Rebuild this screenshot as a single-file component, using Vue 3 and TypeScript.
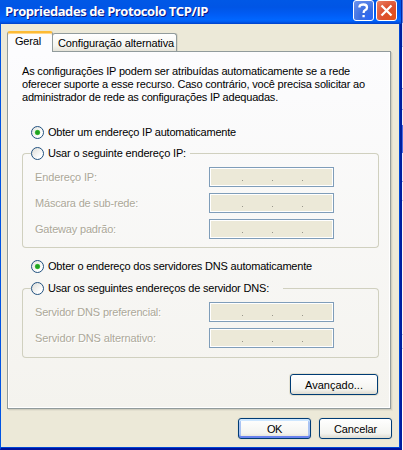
<script setup lang="ts">
import { ref } from 'vue'

interface Row { label: string; width: number }
interface Section {
  id: string
  auto: Row
  manual: Row
  fields: Row[]
}

const title = 'Propriedades de Protocolo TCP/IP'
const intro: Row[] = [
  { label: 'As configurações IP podem ser atribuídas automaticamente se a rede', width: 328 },
  { label: 'oferecer suporte a esse recurso. Caso contrário, você precisa solicitar ao', width: 343 },
  { label: 'administrador de rede as configurações IP adequadas.', width: 256 },
]
const sections: Section[] = [
  {
    id: 'address',
    auto: { label: 'Obter um endereço IP automaticamente', width: 188 },
    manual: { label: 'Usar o seguinte endereço IP:', width: 138 },
    fields: [
      { label: 'Endereço IP:', width: 62 },
      { label: 'Máscara de sub-rede:', width: 103 },
      { label: 'Gateway padrão:', width: 81 },
    ],
  },
  {
    id: 'dns',
    auto: { label: 'Obter o endereço dos servidores DNS automaticamente', width: 264 },
    manual: { label: 'Usar os seguintes endereços de servidor DNS:', width: 221 },
    fields: [
      { label: 'Servidor DNS preferencial:', width: 126 },
      { label: 'Servidor DNS alternativo:', width: 121 },
    ],
  },
]
const mode = ref<Record<string, string>>({ address: 'auto', dns: 'auto' })

const vFit = {
  mounted(el: HTMLElement, binding: { value: number }) {
    const natural = el.getBoundingClientRect().width
    const count = (el.textContent ?? '').length
    el.style.letterSpacing = `${(binding.value - natural) / count}px`
  },
}
</script>

<template>
  <div class="screen">
    <div class="window">
      <header class="titlebar">
        <span v-fit="203" class="t title">{{ title }}</span>
        <button class="cap help" aria-label="Ajuda">
          <svg width="21" height="21" viewBox="0 0 21 21"><path d="M6.5 7.5V6.5Q7 4.5 10.5 4.5Q14 4.5 14 7.4Q14 9 12.2 10.1Q10.6 11 10.6 13M10.6 15v2.2" /></svg>
        </button>
        <button class="cap close" aria-label="Fechar">
          <svg width="21" height="21" viewBox="0 0 21 21"><path d="M5.5 5.5l10 10M15.5 5.5l-10 10" /></svg>
        </button>
      </header>
      <main class="client">
        <nav class="tabs">
          <div class="tab active"><span v-fit="26" class="t">Geral</span></div>
          <div class="tab"><span v-fit="116" class="t">Configuração alternativa</span></div>
        </nav>
        <section class="panel">
          <div class="intro">
            <div v-for="line in intro" :key="line.label"><span v-fit="line.width" class="t">{{ line.label }}</span></div>
          </div>
          <div v-for="s in sections" :key="s.id" class="section" :class="s.id">
            <div class="option" @click="mode[s.id] = 'auto'">
              <i class="radio" :class="{ on: mode[s.id] === 'auto' }"></i>
              <span v-fit="s.auto.width" class="t">{{ s.auto.label }}</span>
            </div>
            <div class="option manual" @click="mode[s.id] = 'manual'">
              <i class="edge"></i>
              <i class="radio" :class="{ on: mode[s.id] === 'manual' }"></i>
              <span v-fit="s.manual.width" class="t">{{ s.manual.label }}</span>
              <i class="rule"></i>
            </div>
            <div class="group">
              <div v-for="f in s.fields" :key="f.label" class="row">
                <span v-fit="f.width" class="t">{{ f.label }}</span>
                <div class="octets"><i></i><i></i><i></i></div>
              </div>
            </div>
          </div>
          <div class="more"><button class="btn wide"><span v-fit="58" class="t">Avançado...</span></button></div>
        </section>
        <footer class="actions">
          <button class="btn default"><span v-fit="15" class="t">OK</span></button>
          <button class="btn"><span v-fit="43" class="t">Cancelar</span></button>
        </footer>
      </main>
    </div>
    <div class="behind"></div>
  </div>
</template>

<style>
body { overflow: hidden; }
</style>

<style scoped>
* { box-sizing: border-box; }
.screen {
  display: flex;
  width: 403px;
  height: 450px;
  overflow: hidden;
  font: 11px/13px "Liberation Sans", Arial, sans-serif;
  color: #000;
}
.t { display: inline-block; white-space: nowrap; flex: none; }
button { margin: 0; padding: 0; font: inherit; color: inherit; }
.window {
  display: flex;
  flex-direction: column;
  width: 402px;
  height: 450px;
  background: #ece9d8;
  border: solid;
  border-width: 0 2px 2px 1px;
  border-color: #0054e3 #001ea0 #00139c #0054e3;
  box-shadow: inset -3px -3px #0046d5;
}
.behind {
  flex: 1;
  background: linear-gradient(#5c7ee0 0 23px, #dcdcf4 23px 46px, #b4b8e0 46px 47px, #fff 47px 88px, #8e9ce0 88px 89px, #e6e6f5 89px 109px, #8e9ce0 109px 110px, #f0f0fa 110px 125px, #4d6ce0 125px 153px, #eef 153px 181px, #8e9ce0 181px 182px, #f5f5fc 182px 200px, #b9c2ec 200px 201px, #f8f8fc 201px 334px, #c4c6e4 334px 335px, #f5f5fc 335px 348px, #c4c6e4 348px 349px, #fff 349px);
}
.titlebar {
  display: flex;
  align-items: flex-start;
  height: 24px;
  margin: 0 -2px 0 -1px;
  padding: 0 5px;
  background: linear-gradient(#0058e6, #0055e5 30%, #005cf5 60%, #0066ff 82%, #005bf0 91%, #0040c8);
  box-shadow: inset -1px 0 #0028a8;
}
.title {
  margin-top: 3px;
  font: bold 13px/16px "Open Sans", "Noto Sans", sans-serif;
  color: #fff;
  text-shadow: 1px 1px #0a1883;
}
.cap {
  width: 21px;
  height: 21px;
  margin-left: 2px;
  border: 1px solid #fff;
  border-radius: 3px;
  background: radial-gradient(circle at 80% 90%, #2a66f5, #3c6ee0 40%, #6d94ee);
}
.cap.help { margin-left: auto; }
.cap.close { background: radial-gradient(circle at 85% 85%, #e0501c, #dc5030 50%, #ec8468); }
.cap svg { display: block; margin: -1px; fill: none; stroke: #fff; stroke-width: 2.3; }
.client {
  flex: 1;
  margin: 0 1px 1px 0;
  padding: 7px 7px 0 6px;
  background: #ece9d8;
}
.tabs { display: flex; align-items: flex-end; height: 20px; position: relative; }
.tab {
  height: 18px;
  width: 125px;
  padding: 3px 0 0 5px;
  margin-left: -1px;
  border: 1px solid #919b9c;
  border-bottom: 0;
  border-radius: 3px 3px 0 0;
  background: linear-gradient(#fff, #f5f5f0 70%, #e5e3d8);
  box-shadow: 1px 0 #d8d5c5;
}
.tab.active {
  z-index: 1;
  width: 46px;
  height: 21px;
  margin: 0 0 -1px;
  padding: 2px 0 0 7px;
  border-top: 2px solid #fdbb35;
  background: #fcfcfe;
  box-shadow: inset 0 1px #ffd78a;
}
.panel {
  width: 384px;
  height: 358px;
  padding: 13px 11px 0 14px;
  border: 1px solid #919b9c;
  background: linear-gradient(#fcfcfe, #f4f3ee);
  box-shadow: 1px 1px #d0cebf, 2px 2px #e3e0d0, inset -1px -1px #fff, inset 1px 0 #fff;
}
.intro { height: 61px; }
.intro > div { height: 13px; }
.section.address { height: 134px; }
.section.dns { height: 114px; }
.option { display: flex; align-items: center; height: 13px; padding-left: 9px; }
.option .t { margin-left: 4px; }
.manual { margin-top: 8px; padding-left: 0; }
.dns .manual { margin-top: 9px; }
.radio {
  flex: none;
  width: 13px;
  height: 13px;
  border: 1px solid #21517f;
  border-radius: 50%;
  background: linear-gradient(135deg, #dcdcd7, #fff 75%);
}
.radio.on { background: radial-gradient(circle, #21a121 0 1.8px, #55c94d 2.4px, transparent 3.1px), linear-gradient(135deg, #e4e4df, #fff 75%); }
.edge, .rule { align-self: flex-end; height: 7px; border-top: 1px solid #d0d0bf; }
.edge { width: 9px; border-left: 1px solid #d0d0bf; border-top-left-radius: 4px; }
.rule { flex: 1; margin-left: 4px; border-right: 1px solid #d0d0bf; border-top-right-radius: 4px; }
.dns .rule { margin-left: 14px; }
.group {
  display: flex;
  flex-direction: column;
  gap: 6px;
  height: 88px;
  padding: 7px 0 0 12px;
  border: 1px solid #d0d0bf;
  border-top: 0;
  border-radius: 0 0 4px 4px;
}
.dns .group { height: 63px; }
.row { display: flex; flex: none; align-items: center; justify-content: space-between; height: 20px; padding-right: 44px; color: #aca899; text-shadow: 1px 1px #fff; }
.octets {
  display: flex;
  gap: 29px;
  width: 125px;
  height: 20px;
  padding: 12px 0 0 32px;
  border: 1px solid #7f9db9;
  background: #ece9d8;
  box-shadow: inset 0 0 0 1px #fff;
}
.octets i { width: 1px; height: 1px; background: #98968a; }
.more { display: flex; justify-content: flex-end; padding-right: 1px; }
.btn {
  display: flex;
  align-items: center;
  justify-content: center;
  width: 73px;
  height: 21px;
  padding-top: 2px;
  border: 1px solid #003c74;
  border-radius: 3px;
  background: linear-gradient(#fff, #f4f4f0 75%, #dedbd0);
  box-shadow: 0 0 0 1px #e4e1d2;
}
.btn.wide { width: 88px; }
.btn.default { box-shadow: inset 0 2px #cee7ff, inset 0 -2px #6982ee, inset 2px 0 #a9c3f3, inset -2px 0 #a9c3f3, 0 0 0 1px #e4e1d2; }
.actions { display: flex; justify-content: flex-end; gap: 8px; margin-top: 9px; }
</style>
